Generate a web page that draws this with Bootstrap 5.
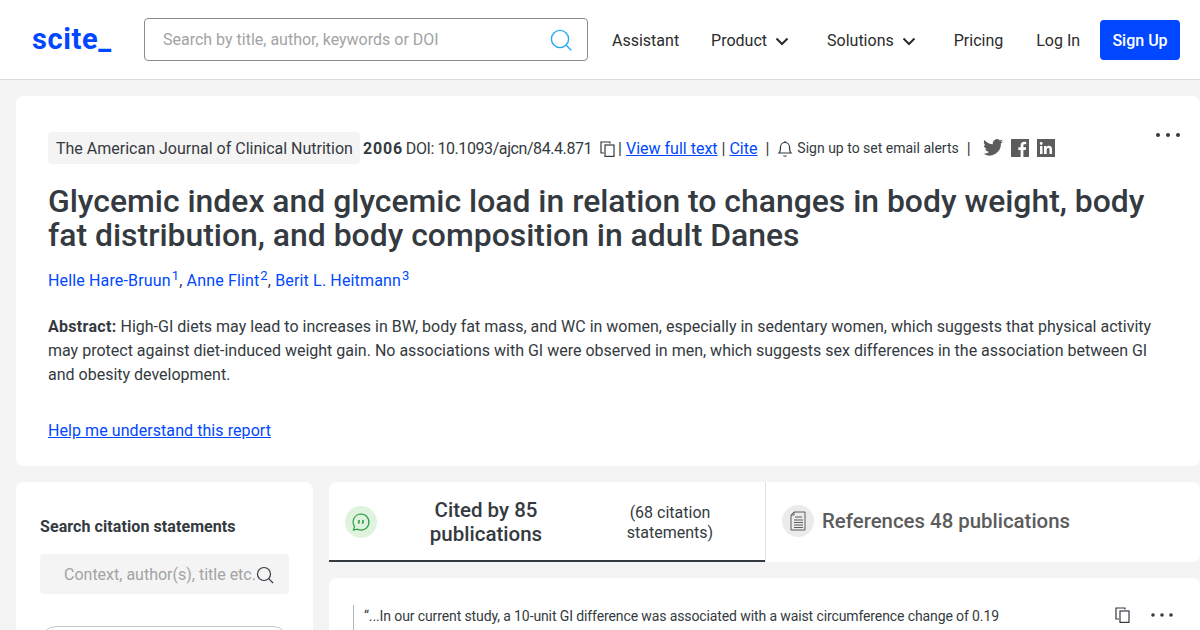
<!DOCTYPE html>
<html lang="en">
<head>
  <meta charset="UTF-8">
  <title>Glycemic index and glycemic load - scite</title>
  <link href="https://cdn.jsdelivr.net/npm/bootstrap@5.3.2/dist/css/bootstrap.min.css" rel="stylesheet">
  <style>
    html, body { height: 630px; overflow: hidden; }
    body { background: #f4f4f4; font-family: Roboto, "Liberation Sans", sans-serif; color: #343a40; font-size: 16px; }
    a { color: #0047ff; }
    .top-bar { height: 80px; background: #fff; border-bottom: 1px solid #dcdcdc; padding: 0 20px 0 32px; }
    .brand-name { width: 112px; font-size: 29px; font-weight: 700; color: #0047ff; text-decoration: none; letter-spacing: .6px; }
    .top-search { width: 444px; height: 43px; border: 1px solid #8a8a8a; border-radius: 4px; padding: 0 14px 0 18px; color: #a3a3a3; }
    .top-link { color: #2b2b2b; text-decoration: none; white-space: nowrap; padding-top: 2px; }
    .nav-links { margin-left: 24px; gap: 32px; }
    .caret-a { margin-right: 6px; }
    .caret-b { margin-right: 6px; }
    .login-link { margin-left: 1px; }
    .signup-btn { background: #0047ff; color: #fff; font-weight: 500; height: 40px; width: 80px; padding: 0; line-height: 41px; border: 0; border-radius: 4px; margin-left: auto; }
    .signup-btn:hover { background: #0047ff; color: #fff; }
    .head-panel { background: #fff; margin: 16px 0 16px 16px; height: 370px; padding: 36px 32px 0; border-radius: 8px; position: relative; }
    .meta-line { height: 33px; white-space: nowrap; color: #343a40; }
    .journal-tag { background: #f4f4f4; border-radius: 4px; height: 32px; line-height: 33px; padding: 0 7px 0 8px; margin: 0 3px 1px 0; white-space: nowrap; }
    .meta-year { letter-spacing: .8px; margin-right: -1px; }
    .doi-text { letter-spacing: -.42px; }
    .pipe-tight { margin: 0 4px 0 -2px; }
    .alert-text { font-size: 14px; }
    .social-ico { margin-bottom: 2px; }
    .art-title { font-size: 31.9px; line-height: 34px; font-weight: 500; color: #343a40; margin: 19px 0 0; }
    .author-line { margin: 17px 0 0; height: 24px; line-height: 24px; letter-spacing: .15px; }
    .author-line a { text-decoration: none; }
    .author-line sup { font-size: 13px; margin-left: 1px; }
    .abstract-text { margin: 22px 0 0; line-height: 24px; }
    .abstract-text b { font-weight: 700; letter-spacing: .3px; }
    .help-link { display: block; margin-top: 32px; line-height: 24px; letter-spacing: .07px; }
    .more-dots { position: absolute; right: 19px; top: 36px; }
    .lower-wrap { margin-left: 16px; gap: 16px; }
    .side-panel { width: 297px; height: 200px; background: #fff; border-radius: 8px 8px 0 0; padding: 34px 24px 0; flex: none; }
    .side-title { font-weight: 700; font-size: 16px; line-height: 22px; letter-spacing: .08px; }
    .side-search { height: 40px; background: #f4f4f4; border-radius: 4px; margin-top: 16px; padding: 2px 15px 0 24px; color: #a3a3a3; white-space: nowrap; }
    .side-box { height: 40px; border: 1px solid #c8c8c8; border-radius: 16px; margin-top: 32px; }
    .main-col { flex: 1; min-width: 0; }
    .tab-row { height: 80px; background: #fff; border-radius: 8px 8px 8px 0; }
    .tab-cited { width: 436px; height: 80px; border-bottom: 2px solid #343a40; padding: 2px 0 0 16px; }
    .tab-refs { flex: 1; border-left: 1px solid #e3e3e3; padding: 0 0 2px 16px; }
    .round-ico { width: 32px; height: 32px; border-radius: 50%; flex: none; }
    .ico-green { background: #dff3df; }
    .ico-grey { background: #ebebeb; }
    .cited-main { width: 186px; margin-left: 16px; text-align: center; font-size: 20.5px; line-height: 24px; font-weight: 500; }
    .cited-sub { width: 132px; margin: 2px 0 0 25px; text-align: center; line-height: 20px; }
    .refs-text { font-size: 20.4px; font-weight: 500; color: #5c5c5c; margin-left: 8px; white-space: nowrap; }
    .quote-panel { background: #fff; margin-top: 16px; height: 60px; border-radius: 8px 8px 0 0; padding: 27px 26px 0 24px; }
    .quote-text { border-left: 1px solid #b5b5b5; padding-left: 10px; font-size: 14px; line-height: 22px; height: 40px; white-space: nowrap; letter-spacing: -.11px; }
    .quote-tools { gap: 19px; }
    .copy-ico { margin-top: 2px; }
    .dots-ico { margin-top: 7px; }
  </style>
</head>
<body>

<header class="top-bar d-flex align-items-center">
  <a href="#" class="brand-name">scite_</a>
  <div class="top-search d-flex align-items-center justify-content-between">
    <span>Search by title, author, keywords or DOI</span>
    <svg width="24" height="24" viewBox="0 0 24 24" fill="none" stroke="#2aa8f5" stroke-width="1.4"><circle cx="11" cy="11" r="8.6"/><path d="M17.2 17.2l5 5"/></svg>
  </div>
  <nav class="nav-links d-flex align-items-center">
    <a href="#" class="top-link">Assistant</a>
    <a href="#" class="top-link caret-a d-flex align-items-center gap-2">Product
      <svg width="14" height="14" viewBox="0 0 14 14" fill="none" stroke="#2b2b2b" stroke-width="2"><path d="M1.500 4.500l5.500 5.500 5.500-5.500"/></svg></a>
    <a href="#" class="top-link caret-b d-flex align-items-center gap-2">Solutions
      <svg width="14" height="14" viewBox="0 0 14 14" fill="none" stroke="#2b2b2b" stroke-width="2"><path d="M1.500 4.500l5.500 5.500 5.500-5.500"/></svg></a>
    <a href="#" class="top-link">Pricing</a>
    <a href="#" class="top-link login-link">Log In</a>
  </nav>
  <a href="#" class="btn signup-btn">Sign Up</a>
</header>

<section class="head-panel">
  <div class="meta-line d-flex align-items-center">
    <span class="journal-tag">The American Journal of Clinical Nutrition</span>
    <b class="meta-year">2006</b>&nbsp;<span class="doi-text">DOI: 10.1093/ajcn/84.4.871</span>&nbsp;
    <svg class="mx-1" width="16" height="16" viewBox="0 0 16 16" fill="none" stroke="#343a40" stroke-width="1.2"><path d="M10 2.500V1H1v11h3"/><rect x="5" y="4" width="9" height="11.400"/></svg><span class="pipe-tight">|</span>
    <a href="#">View full text</a>&nbsp;|&nbsp;<a href="#">Cite</a>
    <span class="mx-2">|</span>
    <svg width="16" height="18" viewBox="0 0 16 18" fill="none" stroke="#343a40" stroke-width="1.200"><path d="M2 13c1.500-1.500 1.500-3 1.500-6a4.500 4.500 0 0 1 9 0c0 3 0 4.500 1.500 6z"/><path d="M6.500 15.500c.8 1 2.200 1 3 0"/><path d="M8 1v1.500"/></svg>
    <span class="alert-text ms-1">Sign up to set email alerts</span>
    <span class="mx-2">|</span>
    <svg class="ms-1 social-ico" width="20" height="17" viewBox="0 0 24 20" fill="#5c5c5c"><path d="M24 2.400c-.9.400-1.800.7-2.800.8 1-.6 1.800-1.600 2.200-2.700-1 .6-2 1-3.100 1.200A4.900 4.900 0 0 0 11.900 6.200C7.800 6 4.200 4 1.700.9c-1.300 2.200-.7 5.100 1.500 6.600-.8 0-1.600-.2-2.200-.6 0 2.300 1.600 4.400 3.900 4.900-.7.200-1.500.2-2.200.1.600 2 2.400 3.400 4.600 3.400A9.900 9.900 0 0 1 0 17.300 13.900 13.900 0 0 0 21.500 4.900c1-.7 1.900-1.500 2.500-2.500z"/></svg>
    <svg class="ms-2 social-ico" width="18" height="18" viewBox="0 0 18 18"><rect width="18" height="18" fill="#5c5c5c"/><path fill="#fff" d="M12.400 18v-7h2.300l.4-2.700h-2.700V6.600c0-.8.200-1.300 1.300-1.300h1.500V2.900c-.3 0-1.100-.1-2.100-.1-2.100 0-3.500 1.300-3.500 3.600v1.900H7.300V11h2.300v7z"/></svg>
    <svg class="ms-2 social-ico" width="18" height="18" viewBox="0 0 18 18"><rect width="18" height="18" fill="#5c5c5c"/><path fill="#fff" d="M3 7h2.500v8H3zM4.200 3a1.400 1.400 0 1 1 0 2.900 1.400 1.400 0 0 1 0-2.900zM7 7h2.400v1.100c.4-.7 1.300-1.300 2.500-1.300 2.600 0 3.100 1.700 3.100 3.900V15h-2.500v-3.800c0-1 0-2.200-1.300-2.200s-1.500 1-1.500 2.100V15H7z"/></svg>
  </div>
  <h1 class="art-title">Glycemic index and glycemic load in relation to changes in body weight, body fat distribution, and body composition in adult Danes</h1>
  <p class="author-line"><a href="#">Helle Hare-Bruun<sup>1</sup></a>, <a href="#">Anne Flint<sup>2</sup></a>, <a href="#">Berit L. Heitmann<sup>3</sup></a></p>
  <p class="abstract-text"><b>Abstract:</b> High-GI diets may lead to increases in BW, body fat mass, and WC in women, especially in sedentary women, which suggests that physical activity may protect against diet-induced weight gain. No associations with GI were observed in men, which suggests sex differences in the association between GI and obesity development.</p>
  <a href="#" class="help-link">Help me understand this report</a>
  <svg class="more-dots" width="26" height="6" viewBox="0 0 26 6" fill="#343a40"><circle cx="3" cy="3" r="2"/><circle cx="13" cy="3" r="2"/><circle cx="23" cy="3" r="2"/></svg>
</section>

<div class="lower-wrap d-flex">
  <aside class="side-panel">
    <div class="side-title">Search citation statements</div>
    <div class="side-search d-flex align-items-center justify-content-between">
      <span>Context, author(s), title etc.</span>
      <svg width="18" height="18" viewBox="0 0 18 18" fill="none" stroke="#343a40" stroke-width="1.200"><circle cx="8" cy="8" r="6.500"/><path d="M12.700 12.700l4.300 4.300"/></svg>
    </div>
    <div class="side-box"></div>
  </aside>
  <div class="main-col">
    <div class="tab-row d-flex">
      <div class="tab-cited d-flex align-items-center">
        <span class="round-ico ico-green d-flex align-items-center justify-content-center">
          <svg width="20" height="20" viewBox="0 0 20 20" fill="none" stroke="#2f9e44" stroke-width="1.200"><path d="M10 2a8 8 0 1 1-3.500 15.200L2.500 18l1-3.500A8 8 0 0 1 10 2z"/><path stroke-width="1.600" d="M8 8v2.500l-.8 1M12 8v2.500l-.8 1"/></svg>
        </span>
        <div class="cited-main">Cited by 85 publications</div>
        <div class="cited-sub">(68 citation statements)</div>
      </div>
      <div class="tab-refs d-flex align-items-center">
        <span class="round-ico ico-grey d-flex align-items-center justify-content-center">
          <svg width="18" height="20" viewBox="0 0 18 20" fill="none" stroke="#5c5c5c" stroke-width="1"><path d="M5 1h11v18H2V4z"/><path d="M5 1v3H2M6 6h7M5 9h9M5 11.500h9M5 14h9M5 16.500h9"/></svg>
        </span>
        <span class="refs-text">References 48 publications</span>
      </div>
    </div>
    <div class="quote-panel d-flex justify-content-between">
      <div class="quote-text">“...In our current study, a 10-unit GI difference was associated with a waist circumference change of 0.19</div>
      <div class="quote-tools d-flex align-items-start">
        <svg class="copy-ico" width="16" height="16" viewBox="0 0 16 16" fill="none" stroke="#343a40" stroke-width="1.200"><path d="M10 2.500V1H1v11h3"/><rect x="5" y="4" width="9" height="11.400"/></svg>
        <svg class="dots-ico" width="24" height="6" viewBox="0 0 24 6" fill="#343a40"><circle cx="3" cy="3" r="1.800"/><circle cx="12" cy="3" r="1.800"/><circle cx="21" cy="3" r="1.800"/></svg>
      </div>
    </div>
  </div>
</div>

<script src="https://cdn.jsdelivr.net/npm/bootstrap@5.3.2/dist/js/bootstrap.bundle.min.js"></script>
</body>
</html>
